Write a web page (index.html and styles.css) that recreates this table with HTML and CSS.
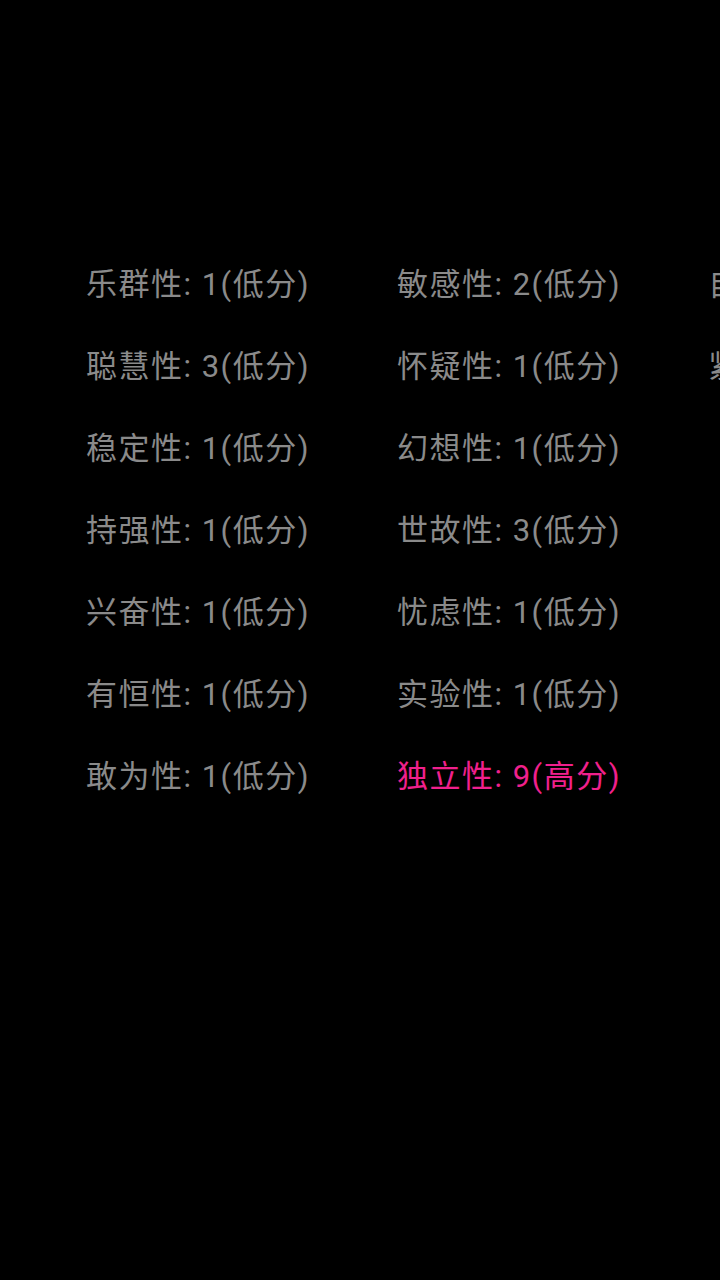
FILE: index.html
```html
<!doctype html>
<html lang="zh-CN">
<head>
  <meta charset="utf-8">
  <meta name="viewport" content="width=device-width, initial-scale=1">
  <title>16PF 结果</title>
  <link rel="stylesheet" href="styles.css">
</head>
<body>
  <main class="result">
    <ul class="factors">
      <li class="factor">乐群性: 1(低分)</li>
      <li class="factor">聪慧性: 3(低分)</li>
      <li class="factor">稳定性: 1(低分)</li>
      <li class="factor">持强性: 1(低分)</li>
      <li class="factor">兴奋性: 1(低分)</li>
      <li class="factor">有恒性: 1(低分)</li>
      <li class="factor">敢为性: 1(低分)</li>
      <li class="factor">敏感性: 2(低分)</li>
      <li class="factor">怀疑性: 1(低分)</li>
      <li class="factor">幻想性: 1(低分)</li>
      <li class="factor">世故性: 3(低分)</li>
      <li class="factor">忧虑性: 1(低分)</li>
      <li class="factor">实验性: 1(低分)</li>
      <li class="factor factor-high">独立性: 9(高分)</li>
      <li class="factor">自律性: 1(低分)</li>
      <li class="factor">紧张性: 1(低分)</li>
    </ul>
  </main>
</body>
</html>
```

FILE: styles.css
```css
:root {
  --bg: #000;
  --text: #8a8a8a;
  --high: #f0208c;
}

* {
  box-sizing: border-box;
}

html, body {
  margin: 0;
  background: var(--bg);
  overflow: hidden;
}

body {
  width: 720px;
  height: 1280px;
  font-family: Roboto, "Noto Sans CJK SC", sans-serif;
}

.result {
  padding: 244px 0 0 86px;
}

.factors {
  list-style: none;
  margin: 0;
  padding: 0;
  display: grid;
  grid-template-rows: repeat(7, 82px);
  grid-auto-columns: 311px;
  grid-auto-flow: column;
  width: max-content;
}

.factor {
  font-size: 31px;
  letter-spacing: 1.5px;
  line-height: 82px;
  color: var(--text);
  white-space: nowrap;
}

.factor-high {
  color: var(--high);
}
```
